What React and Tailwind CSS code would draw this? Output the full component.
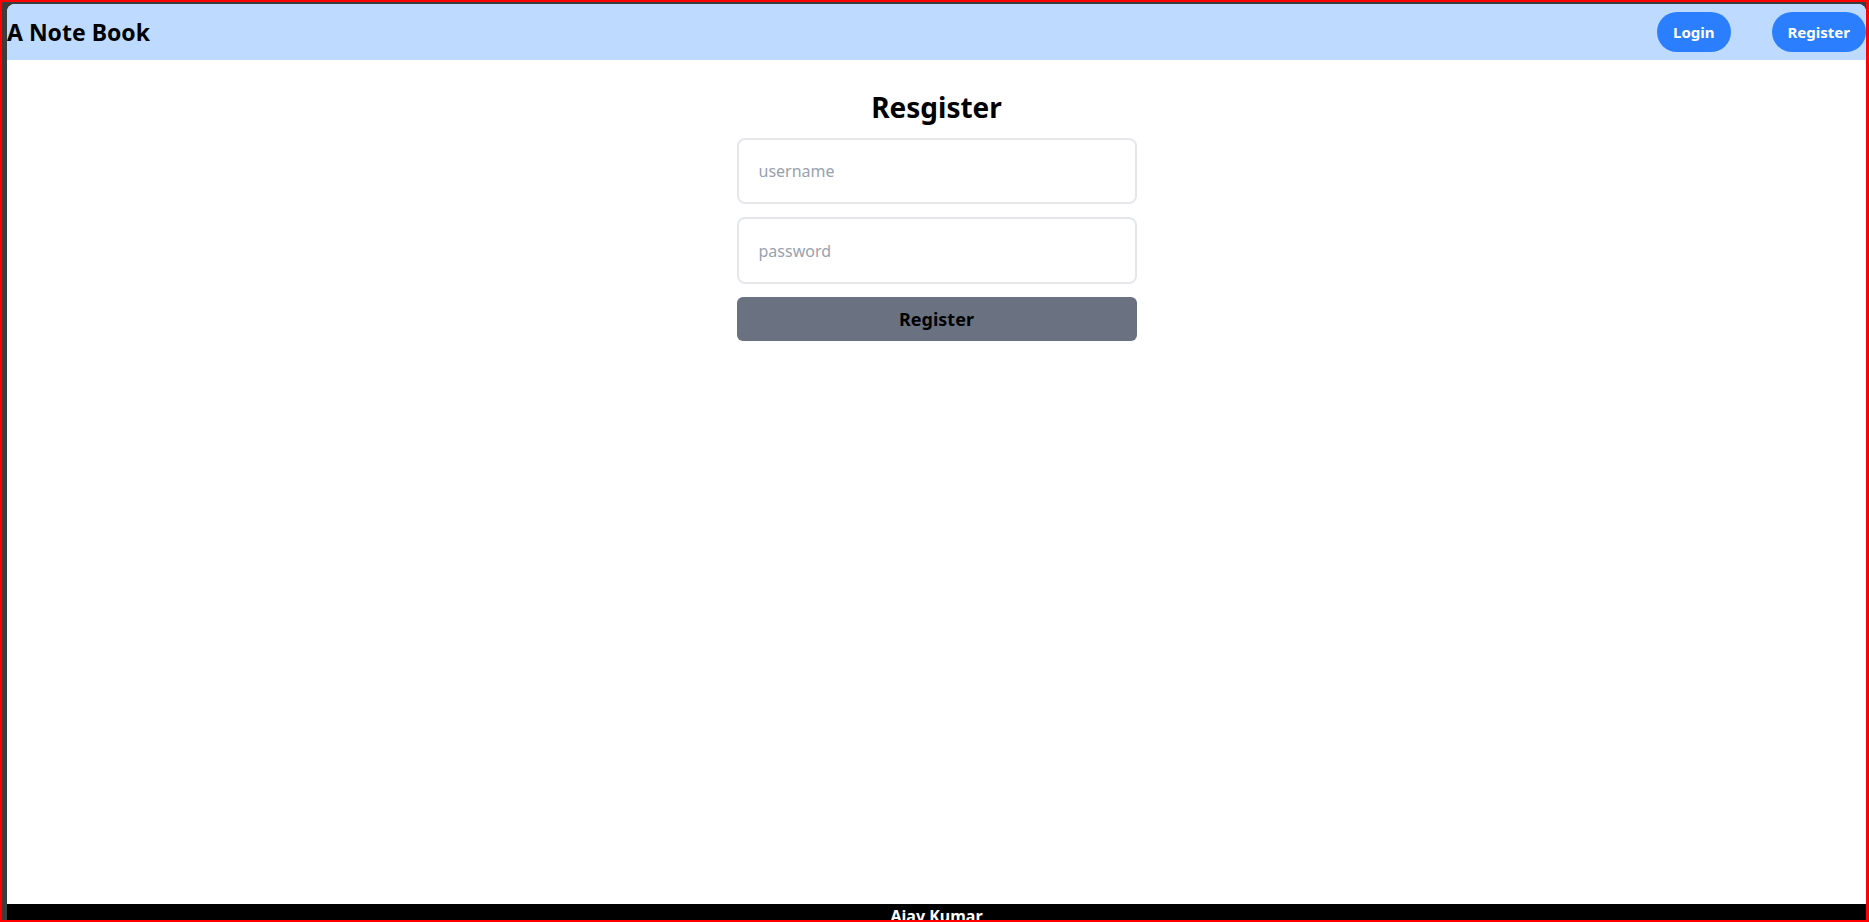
export default function App() {
    return (
        <div className="h-[922px] w-full overflow-hidden bg-[#ff0000] pt-[2px] pl-[2px] pr-[3px] pb-[2px]">
            <div className="h-full w-full bg-[#3c3c3c] pt-[2px] pl-[5px]">
                <div className="h-full w-full overflow-hidden rounded-t-lg bg-white font-['Noto_Sans',sans-serif] flex flex-col">

                    <header className="h-[56px] shrink-0 bg-blue-200 flex items-center justify-between">
                        <h1 className="text-[23px] font-bold text-black">A Note Book</h1>
                        <nav className="flex items-center gap-[41px]">
                            <button className="h-10 px-4 rounded-full bg-blue-500 text-white text-[15px] font-bold">Login</button>
                            <button className="h-10 px-4 rounded-full bg-blue-500 text-white text-[15px] font-bold">Register</button>
                        </nav>
                    </header>

                    <main className="h-[844px] shrink-0">
                        <form className="mx-auto mt-[29px] w-[400px] flex flex-col gap-[13px]">
                            <h2 className="text-center text-[28px] leading-9 font-bold text-black">Resgister</h2>
                            <input className="h-[66px] rounded-lg border-2 border-gray-200 px-5 text-base outline-none placeholder:text-gray-400"
                                placeholder="username" autoComplete="off" />
                            <input className="h-[67px] rounded-lg border-2 border-gray-200 px-5 text-base outline-none placeholder:text-gray-400"
                                placeholder="password" type="password" />
                            <button type="button" className="h-11 rounded-md bg-gray-500 text-black text-lg font-bold">Register</button>
                        </form>
                    </main>

                    <footer className="shrink-0 h-10 bg-black text-center text-white text-base font-bold">
                        Ajay Kumar
                    </footer>
                </div>
            </div>
        </div>
    )
}
